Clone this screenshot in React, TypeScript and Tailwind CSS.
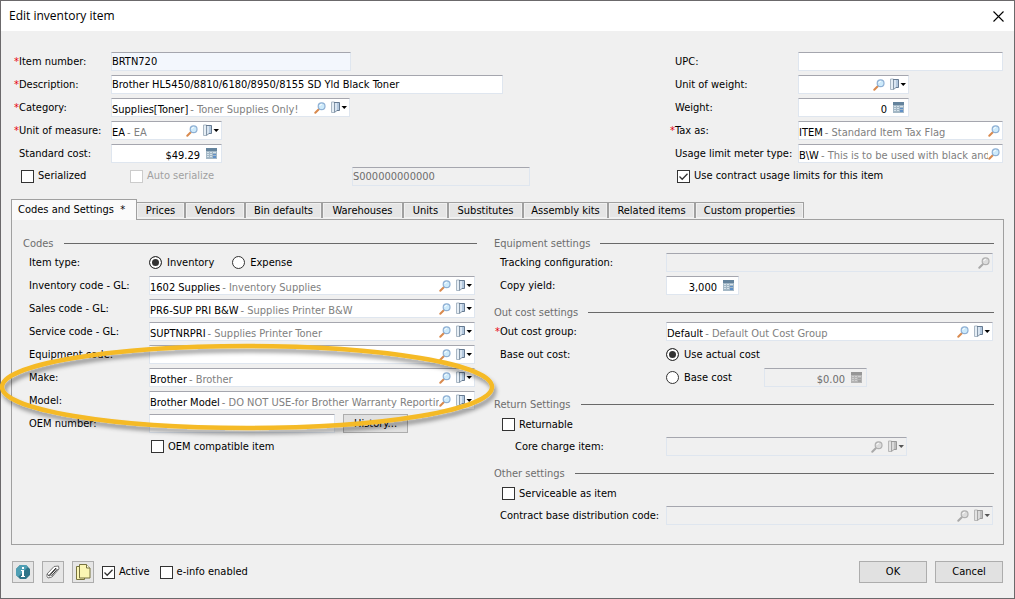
import { ReactNode, useState } from "react";
import clsx from "clsx";

const TABS = [
  { name: "Prices", width: "w-[49px]" },
  { name: "Vendors", width: "w-[60px]" },
  { name: "Bin defaults", width: "w-[77px]" },
  { name: "Warehouses", width: "w-[81px]" },
  { name: "Units", width: "w-[45px]" },
  { name: "Substitutes", width: "w-[75px]" },
  { name: "Assembly kits", width: "w-[85px]" },
  { name: "Related items", width: "w-[87px]" },
  { name: "Custom properties", width: "w-[108px]" },
];

const FIELD = "flex h-[19px] items-center border border-t-[#a5a6ae] border-[#dfe6ef]";

// Label column widths
const GENERAL = "grid-cols-[97px_minmax(0,1fr)]";
const PRICING = "grid-cols-[128px_minmax(0,1fr)]";
const CODES = "grid-cols-[125px_minmax(0,1fr)]";
const SETTINGS = "grid-cols-[171px_minmax(0,1fr)]";

function SearchIcon({ disabled }: { disabled?: boolean }) {
  return (
    <svg width="12" height="12" viewBox="0 0 12 12" fill="none">
      <path d="M4.800 7.200 1.300 10.700" stroke={disabled ? "#a9a9a9" : "#d98a4e"} strokeWidth="2" strokeLinecap="round" />
      <circle cx="7.600" cy="4.200" r="3.400" fill={disabled ? "#dcdcdc" : "#cdeafb"} stroke={disabled ? "#b0b0b0" : "#8fb0d4"} strokeWidth="1.200" />
      <path d="M5.800 4a2 2 0 0 1 2-1.700" stroke="#fff" />
    </svg>
  );
}

function OpenIcon({ disabled }: { disabled?: boolean }) {
  return (
    <svg width="16" height="13" viewBox="0 0 16 13" fill="none">
      <path d="M.5 1h3v10.500h-3z" fill={disabled ? "#e2e2e2" : "#e6eef5"} stroke={disabled ? "#b8b8b8" : "#a9b7c4"} />
      <path d="M3 1h6v8.500H6L3 12z" fill={disabled ? "#dadada" : "#d9e5f1"} />
      <path d="M6 2h2v7H6z" fill={disabled ? "#bdbdbd" : "#b3c8de"} />
      <path d="M3 1.500h5.500v8H6" stroke={disabled ? "#999" : "#667a91"} />
      <path d="M3.500 2v9.500l2.500-2" stroke={disabled ? "#a5a5a5" : "#8496a8"} />
      <path d="M10.500 5h5.500l-2.750 3z" fill={disabled ? "#555" : "#000"} />
    </svg>
  );
}

function CalcIcon({ disabled }: { disabled?: boolean }) {
  return (
    <svg width="11" height="11" viewBox="0 0 11 11">
      <rect width="11" height="11" fill={disabled ? "#b4b4b4" : "#a3b7c5"} />
      <rect width="11" height="3" fill={disabled ? "#969696" : "#64839c"} />
      <path
        d="M1 4h2v1H1zM4 4h2v1H4zM7 4h3v1H7zM1 6h2v1H1zM4 6h2v1H4zM1 8h2v1H1zM4 8h2v1H4z"
        fill={disabled ? "#cfcfcf" : "#d5e2ea"}
      />
      <path d="M7 6h3v1H7zM7 8h3v2H7z" fill={disabled ? "#a2a2a2" : "#5f90c8"} />
    </svg>
  );
}

function Label({ id, required, children }: { id?: string; required?: boolean; children: ReactNode }) {
  return (
    <label htmlFor={id} className="flex shrink-0 whitespace-nowrap">
      <span className="w-[5px] text-right text-red-600">{required ? "*" : ""}</span>
      {children}
    </label>
  );
}

function Row({ id, label, required, cols, children }: {
  id?: string;
  label: string;
  required?: boolean;
  cols: string;
  children: ReactNode;
}) {
  return (
    <div className={clsx("grid h-[23px] items-center", cols)}>
      <Label id={id} required={required}>{label}</Label>
      {children}
    </div>
  );
}

function Lookup({ id, code = "", text, open = true, disabled, className }: {
  id: string;
  code?: string;
  text?: string;
  open?: boolean;
  disabled?: boolean;
  className?: string;
}) {
  return (
    <div className={clsx(FIELD, disabled ? "bg-[#f0f0f0]" : "bg-white", className)}>
      <div className="flex min-w-0 flex-1 items-center overflow-hidden pt-1 whitespace-nowrap">
        <input
          id={id}
          defaultValue={code}
          disabled={disabled}
          className={clsx("bg-transparent outline-none", text ? "field-sizing-content shrink-0" : "w-full")}
        />
        {text && <span className="ml-0.5 text-[#808080]">- {text}</span>}
      </div>
      <button type="button" aria-label="Search" disabled={disabled} className={open ? "mr-[5px]" : "mr-0.5"}>
        <SearchIcon disabled={disabled} />
      </button>
      {open && (
        <button type="button" aria-label="Open" disabled={disabled} className="mr-0.5">
          <OpenIcon disabled={disabled} />
        </button>
      )}
    </div>
  );
}

function NumberField({ id, value, disabled, className }: {
  id: string;
  value: string;
  disabled?: boolean;
  className?: string;
}) {
  return (
    <div className={clsx(FIELD, disabled ? "bg-[#f0f0f0] text-[#6d6d6d]" : "bg-white", className)}>
      <input
        id={id}
        aria-label={id}
        defaultValue={value}
        disabled={disabled}
        className="w-full min-w-0 flex-1 bg-transparent pt-1 text-right outline-none"
      />
      <button type="button" aria-label="Calculator" disabled={disabled} className="mr-1 ml-1.5">
        <CalcIcon disabled={disabled} />
      </button>
    </div>
  );
}

function Check({ label, checked, disabled }: { label: string; checked?: boolean; disabled?: boolean }) {
  return (
    <label className={clsx("flex items-center gap-1 whitespace-nowrap", disabled && "text-[#a0a0a0]")}>
      <span className="grid size-[13px]">
        <input
          type="checkbox"
          defaultChecked={checked}
          disabled={disabled}
          className="peer col-start-1 row-start-1 size-[13px] appearance-none border border-[#333] bg-white disabled:border-[#ccc]"
        />
        <svg viewBox="0 0 13 13" fill="none" className="pointer-events-none invisible col-start-1 row-start-1 size-[13px] peer-checked:visible">
          <path d="m2.500 6.500 2.700 2.700 5.300-5.500" stroke="#333" strokeWidth="1.300" />
        </svg>
      </span>
      {label}
    </label>
  );
}

function Radio({ name, label, checked }: { name: string; label: string; checked?: boolean }) {
  return (
    <label className="flex items-center gap-[5px] whitespace-nowrap">
      <input
        type="radio"
        name={name}
        defaultChecked={checked}
        className="size-[13px] appearance-none rounded-full border border-[#333] bg-white checked:bg-[#333] checked:shadow-[inset_0_0_0_2px_white]"
      />
      {label}
    </label>
  );
}

function Heading({ children }: { children: ReactNode }) {
  return (
    <h2 className="mt-2 flex h-[15px] items-center gap-2.5 text-[#6d6d6d]">
      {children}
      <span className="h-px flex-1 bg-[#696969]" />
    </h2>
  );
}

function IconButton({ label, children }: { label: string; children: ReactNode }) {
  return (
    <button type="button" aria-label={label} className="flex size-[22px] items-center justify-center border border-[#adadad] bg-[#e6e6e6]">
      {children}
    </button>
  );
}

function Highlight() {
  return (
    <svg
      width="504"
      height="104"
      viewBox="0 0 504 104"
      fill="none"
      className="pointer-events-none absolute top-[110px] -left-[26px]"
    >
      <defs>
        <filter id="soft" x="-5%" y="-10%" width="110%" height="130%">
          <feDropShadow dx="2" dy="4" stdDeviation="2" floodColor="#000" floodOpacity="0.4" />
        </filter>
      </defs>
      <ellipse cx="250" cy="49" rx="245" ry="41" stroke="#f5ba26" strokeWidth="4.500" filter="url(#soft)" />
    </svg>
  );
}

export default function App() {
  const [active, setActive] = useState("Codes and Settings");

  return (
    <div className="flex min-h-screen flex-col border border-[#6b696b] bg-[#f0f0f0] font-['DejaVu_Sans_Condensed','DejaVu_Sans',sans-serif] text-[11px] leading-[14px] text-black [font-stretch:condensed]">
      <header className="flex h-[30px] items-center justify-between bg-white pr-2.5 pl-2 font-['Open_Sans',sans-serif] text-[12px] [font-stretch:normal]">
        <h1>Edit inventory item</h1>
        <button type="button" aria-label="Close">
          <svg width="11" height="11" viewBox="0 0 11 11" stroke="#000" strokeWidth="1.100">
            <path d="m.5.5 10 10M10.500.5l-10 10" />
          </svg>
        </button>
      </header>

      <section className="flex justify-between pt-[19px] pr-[11px] pl-[13px]">
        <div>
          <Row id="item-number" label="Item number:" required cols={GENERAL}>
            <input id="item-number" defaultValue="BRTN720" className={clsx(FIELD, "w-[240px] bg-[#f3f7fd] outline-none")} />
          </Row>
          <Row id="description" label="Description:" required cols={GENERAL}>
            <input
              id="description"
              defaultValue="Brother HL5450/8810/6180/8950/8155 SD Yld Black Toner"
              className={clsx(FIELD, "w-[392px] bg-white outline-none")}
            />
          </Row>
          <Row id="category" label="Category:" required cols={GENERAL}>
            <Lookup id="category" code="Supplies[Toner]" text="Toner Supplies Only!" className="w-[239px]" />
          </Row>
          <Row id="uom" label="Unit of measure:" required cols={GENERAL}>
            <Lookup id="uom" code="EA" text="EA" className="w-[111px]" />
          </Row>
          <Row id="standard-cost" label="Standard cost:" cols={GENERAL}>
            <NumberField id="standard-cost" value="$49.29" className="w-[111px]" />
          </Row>
          <div className="flex h-[22px] items-center pl-[7px]">
            <div className="w-[109px]">
              <Check label="Serialized" />
            </div>
            <div className="w-[222px]">
              <Check label="Auto serialize" disabled />
            </div>
            <input
              aria-label="Serial number"
              defaultValue="S000000000000"
              disabled
              className={clsx(FIELD, "w-[178px] bg-[#f0f0f0] text-[#6d6d6d]")}
            />
          </div>
        </div>

        <div className="w-[333px]">
          <Row id="upc" label="UPC:" cols={PRICING}>
            <input id="upc" className={clsx(FIELD, "w-full bg-white outline-none")} />
          </Row>
          <Row id="weight-unit" label="Unit of weight:" cols={PRICING}>
            <Lookup id="weight-unit" className="w-[111px]" />
          </Row>
          <Row id="weight" label="Weight:" cols={PRICING}>
            <NumberField id="weight" value="0" className="w-[111px]" />
          </Row>
          <Row id="tax" label="Tax as:" required cols={PRICING}>
            <Lookup id="tax" code="ITEM" text="Standard Item Tax Flag" open={false} />
          </Row>
          <Row id="meter" label="Usage limit meter type:" cols={PRICING}>
            <Lookup id="meter" code="B\W" text="This is to be used with black and" open={false} />
          </Row>
          <div className="flex h-[22px] items-center pl-[7px]">
            <Check label="Use contract usage limits for this item" checked />
          </div>
        </div>
      </section>

      <main className="flex flex-1 flex-col px-2.5 pt-3">
        <div role="tablist" className="flex h-5 items-end">
          <button
            type="button"
            role="tab"
            aria-selected={active === "Codes and Settings"}
            onClick={() => setActive("Codes and Settings")}
            className="relative z-10 -mb-px h-[21px] w-[126px] border border-b-0 border-[#a0a0a0] bg-[#fafafa] px-1.5 text-left whitespace-nowrap"
          >
            Codes and Settings &nbsp;*
          </button>
          {TABS.map((tab) => (
            <button
              key={tab.name}
              type="button"
              role="tab"
              aria-selected={active === tab.name}
              onClick={() => setActive(tab.name)}
              className={clsx(
                "mb-px h-4 border-t border-r-2 border-[#a0a0a0] bg-[#e5e5e5] whitespace-nowrap shadow-[inset_0_0_0_1px_#f0f0f0] last:border-r",
                tab.width
              )}
            >
              {tab.name}
            </button>
          ))}
        </div>

        <div className="grid flex-1 grid-cols-[454fr_500fr] gap-[17px] border border-[#a0a0a0] pt-2 pr-[9px] pb-4 pl-[11px]">
          <div className="relative min-w-0">
            <Heading>Codes</Heading>
            <div className="pr-0.5 pl-px">
              <Row label="Item type:" cols={CODES}>
                <div className="flex gap-[18px]">
                  <Radio name="item-type" label="Inventory" checked />
                  <Radio name="item-type" label="Expense" />
                </div>
              </Row>
              <Row id="inventory-code" label="Inventory code - GL:" cols={CODES}>
                <Lookup id="inventory-code" code="1602 Supplies" text="Inventory Supplies" />
              </Row>
              <Row id="sales-code" label="Sales code - GL:" cols={CODES}>
                <Lookup id="sales-code" code="PR6-SUP PRI B&W" text="Supplies Printer B&W" />
              </Row>
              <Row id="service-code" label="Service code - GL:" cols={CODES}>
                <Lookup id="service-code" code="SUPTNRPRI" text="Supplies Printer Toner" />
              </Row>
              <Row id="equipment-code" label="Equipment code:" cols={CODES}>
                <Lookup id="equipment-code" />
              </Row>
              <Row id="make" label="Make:" cols={CODES}>
                <Lookup id="make" code="Brother" text="Brother" />
              </Row>
              <Row id="model" label="Model:" cols={CODES}>
                <Lookup id="model" code="Brother Model" text="DO NOT USE-for Brother Warranty Reportin" />
              </Row>
              <Row id="oem" label="OEM number:" cols={CODES}>
                <div className="flex items-center gap-2">
                  <input id="oem" className={clsx(FIELD, "w-[186px] bg-white outline-none")} />
                  <button type="button" className="h-[19px] w-[65px] border border-[#adadad] bg-[#e1e1e1]">
                    History...
                  </button>
                </div>
              </Row>
              <div className="flex h-[23px] items-center pl-[127px]">
                <Check label="OEM compatible item" />
              </div>
            </div>
            <Highlight />
          </div>

          <div className="min-w-0">
            <Heading>Equipment settings</Heading>
            <div className="pr-px pl-px">
              <Row id="tracking" label="Tracking configuration:" cols={SETTINGS}>
                <Lookup id="tracking" open={false} disabled />
              </Row>
              <Row id="copy-yield" label="Copy yield:" cols={SETTINGS}>
                <NumberField id="copy-yield" value="3,000" className="w-[73px]" />
              </Row>
            </div>
            <Heading>Out cost settings</Heading>
            <div className="pr-px pl-px">
              <Row id="cost-group" label="Out cost group:" required cols={SETTINGS}>
                <Lookup id="cost-group" code="Default" text="Default Out Cost Group" />
              </Row>
              <Row label="Base out cost:" cols={SETTINGS}>
                <Radio name="base-cost" label="Use actual cost" checked />
              </Row>
              <div className="flex h-[23px] items-center pl-[171px]">
                <div className="w-[98px]">
                  <Radio name="base-cost" label="Base cost" />
                </div>
                <NumberField id="base-cost" value="$0.00" disabled className="w-[103px]" />
              </div>
            </div>
            <Heading>Return Settings</Heading>
            <div className="pr-px pl-px">
              <div className="flex h-[23px] items-center pt-0.5 pl-[7px]">
                <Check label="Returnable" />
              </div>
              <div className="flex h-[23px] items-center pl-[15px]">
                <div className="w-[156px]">
                  <Label id="core-charge">Core charge item:</Label>
                </div>
                <Lookup id="core-charge" disabled className="w-[241px]" />
              </div>
            </div>
            <Heading>Other settings</Heading>
            <div className="pr-px pl-px">
              <div className="flex h-[23px] items-center pt-0.5 pl-[7px]">
                <Check label="Serviceable as item" />
              </div>
              <Row id="contract-code" label="Contract base distribution code:" cols={SETTINGS}>
                <Lookup id="contract-code" disabled />
              </Row>
            </div>
          </div>
        </div>
      </main>

      <footer className="flex items-center gap-2 px-[11px] pt-4 pb-[15px]">
        <IconButton label="Information">
          <svg width="16" height="16" viewBox="0 0 16 16">
            <path d="M5 1h6l4 4v6l-4 4H5l-4-4V5z" fill="#2f7488" />
            <path d="M5 1h6l2 2-10 10-2-2V5z" fill="#4f9fb4" />
            <path d="M7 3h2v2H7zM6 6h3v6h1v1H6v-1h1V7H6z" fill="#fff" />
          </svg>
        </IconButton>
        <IconButton label="Attachments">
          <svg width="16" height="16" viewBox="0 0 16 16" fill="none">
            <path d="m2 10 7-7.500 4.500-.5.5 3-7 8L3 14l-1-1.500z" fill="#fff" stroke="#777" />
            <path d="m4 11.500 7-7.500M6.500 12l6-7M2.500 10.500l2 1.500 6.500-7.500" stroke="#333" />
          </svg>
        </IconButton>
        <IconButton label="Notes">
          <svg width="16" height="17" viewBox="0 0 16 17" fill="#fbf6b4" stroke="#77733f">
            <path d="M1.500 2.500h8v13h-8z" />
            <path d="M4.500.5h7l3.500 3.500v10H4.500z" />
            <path d="M11.500.5V4H15" fill="#fffde6" />
          </svg>
        </IconButton>
        <div className="flex gap-2.5">
          <Check label="Active" checked />
          <Check label="e-info enabled" />
        </div>
        <div className="ml-auto flex gap-2">
          <button type="button" className="h-[22px] w-[68px] border border-[#adadad] bg-[#e1e1e1]">OK</button>
          <button type="button" className="h-[22px] w-[68px] border border-[#adadad] bg-[#e1e1e1]">Cancel</button>
        </div>
      </footer>
    </div>
  );
}
